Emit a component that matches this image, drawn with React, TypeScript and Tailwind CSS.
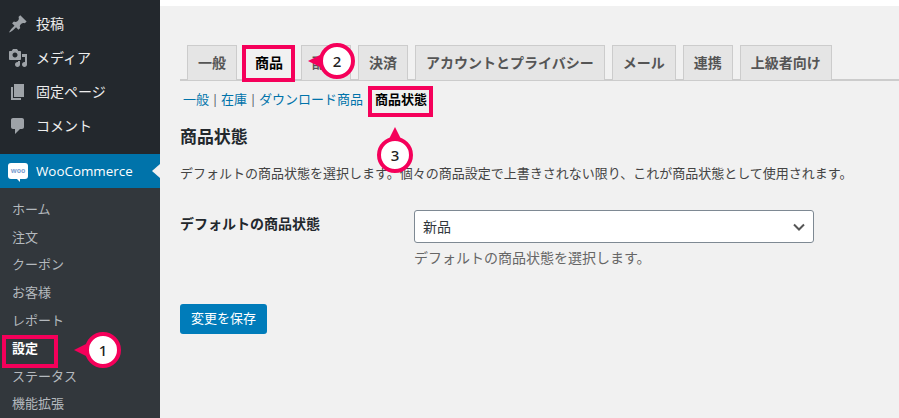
const font = "font-['Open_Sans','Noto_Sans_CJK_JP',sans-serif]";

const mainMenu = [
  {
    label: '投稿',
    icon: (
      <path d="M10.44 3.02l1.82-1.82 6.36 6.35-1.83 1.82c-1.05-.68-2.48-.57-3.41.36l-.75.75c-.92.93-1.04 2.35-.35 3.41l-1.83 1.82-2.41-2.41-2.8 2.79c-.42.42-3.38 2.71-3.8 2.29s1.86-3.39 2.28-3.81l2.79-2.79L4.1 9.36l1.83-1.82c1.05.69 2.48.57 3.4-.36l.75-.75c.93-.92 1.05-2.35.36-3.41z" />
    ),
  },
  {
    label: 'メディア',
    icon: (
      <path d="M13 11V4c0-.55-.45-1-1-1h-1.67L9 1H5L3.67 3H2c-.55 0-1 .45-1 1v7c0 .55.45 1 1 1h10c.55 0 1-.45 1-1zM7 4.5c1.38 0 2.5 1.12 2.5 2.5S8.38 9.5 7 9.5 4.5 8.38 4.5 7 5.62 4.5 7 4.5zM14 6h5v10.5c0 1.38-1.12 2.5-2.5 2.5S14 17.88 14 16.5s1.12-2.5 2.5-2.5c.17 0 .34.02.5.05V9h-3V6zm-4 8.05V13h2v3.5c0 1.38-1.12 2.5-2.5 2.5S7 17.88 7 16.5 8.12 14 9.5 14c.17 0 .34.02.5.05z" />
    ),
  },
  {
    label: '固定ページ',
    icon: <path d="M6 15V2h10v13H6zm-1 1h8v2H3V5h2v11z" />,
  },
  {
    label: 'コメント',
    icon: (
      <path d="M5 2h9c1.1 0 2 .9 2 2v7c0 1.1-.9 2-2 2h-2l-5 5v-5H5c-1.1 0-2-.9-2-2V4c0-1.1.9-2 2-2z" />
    ),
  },
];

const subMenu = ['ホーム', '注文', 'クーポン', 'お客様', 'レポート', '設定', 'ステータス', '機能拡張'];

const tabs = ['一般', '商品', '配送', '決済', 'アカウントとプライバシー', 'メール', '連携', '上級者向け'];

function Marker({ n, dir, className }: { n: number; dir: 'left' | 'up'; className: string }) {
  return (
    <div className={`absolute w-[40px] h-[40px] ${className}`}>
      {dir === 'left' ? (
        <div className="absolute left-[-9px] top-[10px] w-0 h-0 border-y-[10px] border-y-transparent border-r-[20px] border-r-[#f5005a]" />
      ) : (
        <div className="absolute left-[10px] top-[-8px] w-0 h-0 border-x-[10px] border-x-transparent border-b-[20px] border-b-[#f5005a]" />
      )}
      <div className="absolute inset-[2px] rounded-full bg-white border-[4px] border-[#f5005a] flex items-center justify-center text-[15px] font-medium text-[#222] font-['Noto_Sans',sans-serif]">
        {n}
      </div>
    </div>
  );
}

function Highlight({ className }: { className: string }) {
  return <div className={`absolute border-[4px] border-[#f5005a] ${className}`} />;
}

export default function App() {
  return (
    <div className={`relative flex w-[899px] h-[418px] overflow-hidden bg-[#f1f1f1] ${font}`}>
      <aside className="w-40 shrink-0 flex flex-col bg-[#32373c]">
        <div className="bg-[#23282d] pt-[7px] pb-[11px]">
          {mainMenu.map((item) => (
            <div key={item.label} className="flex items-center h-[34px] pl-[8px]">
              <svg viewBox="0 0 20 20" className="w-[20px] h-[20px] fill-[#9ea3a8] shrink-0">
                {item.icon}
              </svg>
              <span className="ml-[8px] text-[14px] leading-[20px] text-[#eeeeee]">{item.label}</span>
            </div>
          ))}
        </div>
        <div className="relative flex items-center h-[34px] pl-[8px] bg-[#0073aa]">
          <div className="relative w-[20px] h-[16px] rounded-[3px] bg-white flex items-center justify-center text-[7px] font-bold leading-none text-[#7f9fd0]">
            woo
            <div className="absolute bottom-[-3px] left-[9px] w-0 h-0 border-t-[3px] border-t-white border-l-[3px] border-l-transparent" />
          </div>
          <span className="ml-[8px] text-[13.4px] leading-[20px] text-white">WooCommerce</span>
          <div className="absolute right-0 top-[10px] w-0 h-0 border-y-[7px] border-y-transparent border-r-[8px] border-r-[#f1f1f1]" />
        </div>
        <div className="pt-[8px]">
          {subMenu.map((label) => (
            <div
              key={label}
              className={`flex items-center h-[27.8px] pl-[12px] text-[13px] ${
                label === '設定' ? 'font-bold text-white' : 'text-[#b4b9be]'
              }`}
            >
              {label}
            </div>
          ))}
        </div>
      </aside>

      <main className="flex-1 flex flex-col">
        <div className="h-[6px] bg-white" />
        <div className="pl-[20px] pt-[39px]">
          <div className="flex gap-[7px] pl-[7px] h-[36px] border-b-2 border-[#cccccc]">
            {tabs.map((tab) => (
              <div
                key={tab}
                className={`h-[36px] px-[10px] border border-[#cccccc] text-[14px] leading-[34px] ${
                  tab === '商品'
                    ? 'bg-[#f1f1f1] border-b-[#f1f1f1] text-black font-bold'
                    : 'bg-[#e5e5e5] text-[#555555] font-semibold'
                }`}
              >
                {tab}
              </div>
            ))}
          </div>

          <div className="flex items-center h-[20px] mt-[9px] pl-[3px] text-[13px] text-[#0073aa]">
            <span>一般</span>
            <span className="w-[12px] text-center text-[#555d66]">|</span>
            <span>在庫</span>
            <span className="w-[12px] text-center text-[#555d66]">|</span>
            <span>ダウンロード商品</span>
            <span className="ml-[12px] font-bold text-black">商品状態</span>
          </div>

          <h2 className="mt-[15px] text-[16.9px] leading-[24px] font-semibold text-[#23282d]">商品状態</h2>

          <p className="mt-[14px] text-[13px] leading-[20px] text-[#444444] whitespace-nowrap">
            デフォルトの商品状態を選択します。個々の商品設定で上書きされない限り、これが商品状態として使用されます。
          </p>

          <div className="flex mt-[27px]">
            <div className="w-[234px] pt-[4px] text-[14px] leading-[20px] font-semibold text-[#23282d] whitespace-nowrap">
              デフォルトの商品状態
            </div>
            <div className="w-[400px]">
              <div className="flex items-center justify-between h-[33px] px-[8px] bg-white border border-[#7e8993] rounded-[3px] text-[14px] text-[#32373c]">
                <span>新品</span>
                <svg viewBox="0 0 12 8" className="w-[12px] h-[8px] fill-none stroke-[#555555] stroke-2">
                  <path d="M1 1.5l5 5 5-5" />
                </svg>
              </div>
              <div className="mt-[5px] text-[14px] leading-[20px] text-[#666666]">デフォルトの商品状態を選択します。</div>
            </div>
          </div>

          <button className="mt-[36px] block w-[87px] h-[30px] rounded-[3px] bg-[#007cba] text-[13px] text-white text-center">
            変更を保存
          </button>
        </div>
      </main>

      <Highlight className="left-[2px] top-[335px] w-[56px] h-[33px]" />
      <Highlight className="left-[242px] top-[45px] w-[53px] h-[37px]" />
      <Highlight className="left-[368px] top-[86px] w-[65px] h-[31px]" />
      <Marker n={1} dir="left" className="left-[83px] top-[330px]" />
      <Marker n={2} dir="left" className="left-[317px] top-[41px]" />
      <Marker n={3} dir="up" className="left-[375px] top-[135px]" />
    </div>
  );
}
